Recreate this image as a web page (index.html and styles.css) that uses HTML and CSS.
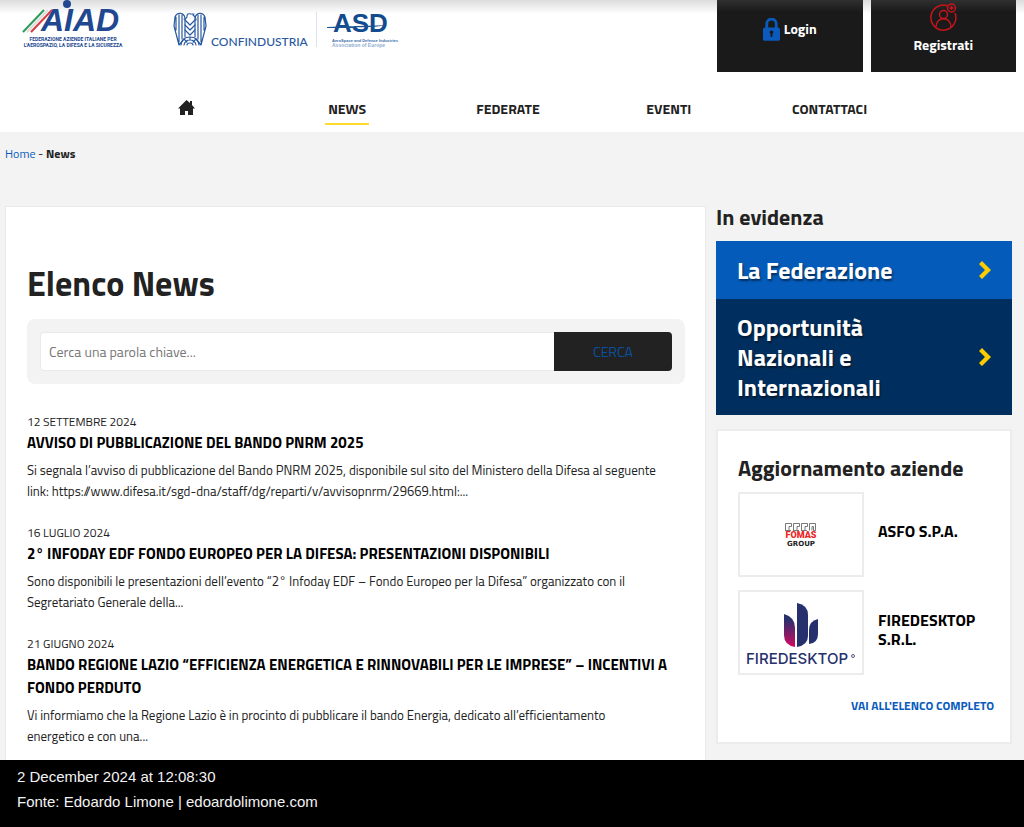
FILE: index.html
```html
<!DOCTYPE html>
<html lang="it">
<head>
<meta charset="utf-8">
<meta name="viewport" content="width=device-width, initial-scale=1">
<title>Elenco News</title>
<link rel="stylesheet" href="styles.css">
</head>
<body>
<header class="header">
  <div class="topbar">
    <a class="brand" href="#" aria-label="AIAD">
      <svg width="106" height="50" viewBox="0 0 106 50">
        <path d="M2 32 23 10" stroke="#2d9a58" stroke-width="2"/>
        <path d="M6 32 27 10" stroke="#ddd" stroke-width="2"/>
        <path d="M10 32 31 10" stroke="#d53d40" stroke-width="2"/>
        <circle cx="46" cy="4" r="4" fill="#214790"/>
        <text class="logo-aiad" x="20" y="31">AIAD</text>
        <text class="logo-caption" x="52" y="41" text-anchor="middle">FEDERAZIONE AZIENDE ITALIANE PER</text>
        <text class="logo-caption" x="52" y="47" text-anchor="middle">L'AEROSPAZIO, LA DIFESA E LA SICUREZZA</text>
      </svg>
    </a>
    <a class="brand brand-confindustria" href="#" aria-label="Confindustria">
      <svg width="136" height="50" viewBox="0 0 136 50">
        <g fill="none" stroke="#2858a0" stroke-width="1.2" stroke-linecap="round" stroke-linejoin="round">
          <path d="M14 16q0-3 4-2h3M20 15q3 2 3 5M14 17q-1 2-3 2"/>
          <path d="M12 18C11 12 4 12 2 17L1 26 6 45 11 39M12 18V37M9 15V39M6 15V42M3 17V30"/>
          <path d="M22 18c1-6 8-6 10-1l1 9-5 19-5-6M22 18V37M25 15V39M28 15V42M31 17V30"/>
          <path d="M12 30l5 5 5-5M12 25l5 5 5-5M12 20l5 5 5-5"/>
          <path d="M8 45q1-8 9-8t9 8M11 45q1-5 6-5t6 5M14 45q0-2 3-2t3 2M17 37v3M11 39l3 3M23 39l-3 3"/>
        </g>
        <text class="logo-confindustria" x="38" y="46">CONFINDUSTRIA</text>
      </svg>
    </a>
    <a class="brand brand-asd" href="#" aria-label="ASD">
      <svg width="72" height="50" viewBox="0 0 72 50">
        <text class="logo-asd" x="6" y="32">ASD</text>
        <path d="M0 27l28-1v2L0 28zM27 26q17 0 34-1-17 3-34 2z" fill="#1c5491"/>
        <text class="logo-asd-small" x="5" y="42">AeroSpace and Defence Industries</text>
        <text class="logo-asd-sub" x="5" y="47">Association of Europe</text>
      </svg>
    </a>
    <div class="account">
      <a class="account-link" href="#">
        <svg width="17" height="23" viewBox="0 0 18 24">
          <path d="M4 11V6a5 5 0 0 1 10 0v5" fill="none" stroke="#0a5bbd" stroke-width="3"/>
          <rect y="10" width="18" height="14" rx="2" fill="#0a5bbd"/>
          <path d="M9 13a2 2 0 0 1 1 3.700V20H8v-3.300A2 2 0 0 1 9 13z" fill="#1a1a1a"/>
        </svg>
        <span>Login</span>
      </a>
      <a class="account-link account-register" href="#">
        <svg width="27" height="28" viewBox="0 0 27 28" fill="none" stroke="#c8151b" stroke-width="1.500">
          <path d="M18 3A12.500 12.500 0 1 0 25 10"/>
          <circle cx="21.500" cy="5" r="4"/>
          <path d="M21.500 3v4M19.500 5h4"/>
          <circle cx="13.500" cy="11.500" r="4"/>
          <path d="M6 24c0-11 15-11 15 0"/>
        </svg>
        <span>Registrati</span>
      </a>
    </div>
  </div>
  <nav class="nav" aria-label="Principale">
    <a class="nav-link" href="#" aria-label="Home">
      <svg width="17" height="15" viewBox="0 0 17 15"><path d="M8.500 0 12 3V1h2v4l3 3.500h-2V15h-5v-4H7v4H2V8.500H0z" fill="#222"/></svg>
    </a>
    <a class="nav-link nav-active" href="#" aria-current="page">NEWS</a>
    <a class="nav-link" href="#">FEDERATE</a>
    <a class="nav-link" href="#">EVENTI</a>
    <a class="nav-link" href="#">CONTATTACI</a>
  </nav>
</header>

<div class="breadcrumb"><a href="#">Home</a> - <strong>News</strong></div>

<div class="layout">
  <main class="news">
    <h1 class="title">Elenco News</h1>
    <form class="search">
      <input class="search-input" type="text" placeholder="Cerca una parola chiave..." aria-label="Cerca una parola chiave">
      <button class="search-button" type="submit">CERCA</button>
    </form>
    <article class="item">
      <time class="item-date" datetime="2024-09-12">12 SETTEMBRE 2024</time>
      <h2 class="item-title">AVVISO DI PUBBLICAZIONE DEL BANDO PNRM 2025</h2>
      <p class="item-text">Si segnala l’avviso di pubblicazione del Bando PNRM 2025, disponibile sul sito del Ministero della Difesa al seguente link: https://www.difesa.it/sgd-dna/staff/dg/reparti/v/avvisopnrm/29669.html:...</p>
    </article>
    <article class="item">
      <time class="item-date" datetime="2024-07-16">16 LUGLIO 2024</time>
      <h2 class="item-title">2° INFODAY EDF FONDO EUROPEO PER LA DIFESA: PRESENTAZIONI DISPONIBILI</h2>
      <p class="item-text">Sono disponibili le presentazioni dell’evento “2° Infoday EDF – Fondo Europeo per la Difesa” organizzato con il Segretariato Generale della...</p>
    </article>
    <article class="item">
      <time class="item-date" datetime="2024-06-21">21 GIUGNO 2024</time>
      <h2 class="item-title">BANDO REGIONE LAZIO “EFFICIENZA ENERGETICA E RINNOVABILI PER LE IMPRESE” – INCENTIVI A FONDO PERDUTO</h2>
      <p class="item-text">Vi informiamo che la Regione Lazio è in procinto di pubblicare il bando Energia, dedicato all’efficientamento energetico e con una...</p>
    </article>
  </main>

  <aside class="side">
    <h2 class="side-title">In evidenza</h2>
    <a class="feature" href="#">
      <span>La Federazione</span>
      <svg width="12" height="18" viewBox="0 0 12 18"><path d="M3 0 12 9 3 18 0 15 6 9 0 3z" fill="#fc0"/></svg>
    </a>
    <a class="feature feature-dark" href="#">
      <span>Opportunità Nazionali e Internazionali</span>
      <svg width="12" height="18" viewBox="0 0 12 18"><path d="M3 0 12 9 3 18 0 15 6 9 0 3z" fill="#fc0"/></svg>
    </a>
    <section class="companies">
      <h2 class="companies-title">Aggiornamento aziende</h2>
      <a class="company" href="#">
        <span class="company-logo">
          <svg width="34" height="24" viewBox="0 0 34 24">
            <path d="M1.500 7.500v-7h6v3H5v4M9.500 7.500v-7h6v3H13v4M17.500 7.500v-7h6v3H21v4M25.500 7.500v-7h6v7h-2v-4H28v4M1 7.500h6M9 7.500h6M17 7.500h6" fill="none" stroke="#777"/>
            <text class="logo-fomas" x="17" y="15" text-anchor="middle">FOMAS</text>
            <text class="logo-group" x="17" y="23" text-anchor="middle">GROUP</text>
          </svg>
        </span>
        <span class="company-name">ASFO S.P.A.</span>
      </a>
      <a class="company" href="#">
        <span class="company-logo">
          <svg width="114" height="70" viewBox="0 0 114 70">
            <defs><linearGradient id="flame" x1="0" y1="0" x2="0" y2="1"><stop offset=".15" stop-color="#26306d"/><stop offset="1" stop-color="#d20a60"/></linearGradient></defs>
            <path d="M40 16Q51 19 51 30V49Q40 47 40 37z" fill="url(#flame)"/>
            <path d="M53 5Q64 7 64 17V38Q64 47 53 49z" fill="#26306d"/>
            <path d="M65 32Q65 23 74 21V36Q74 45 65 46z" fill="#26306d"/>
            <text class="logo-fire" x="2" y="66">FIREDESKTOP</text>
            <circle cx="109" cy="58" r="1.500" fill="none" stroke="#26306d" stroke-width=".8"/>
          </svg>
        </span>
        <span class="company-name">FIREDESKTOP S.R.L.</span>
      </a>
      <a class="companies-all" href="#">VAI ALL'ELENCO COMPLETO</a>
    </section>
  </aside>
</div>

<footer class="caption">
  <p>2 December 2024 at 12:08:30</p>
  <p>Fonte: Edoardo Limone | edoardolimone.com</p>
</footer>
</body>
</html>
```

FILE: styles.css
```css
* { box-sizing: border-box; }
body {
  margin: 0;
  background: #f3f3f3;
  color: #222;
  font-family: "Titillium Web", Roboto, sans-serif;
  font-size: 14px;
}
a { color: #0a5bbd; text-decoration: none; }
svg { display: block; flex: none; }
h1, h2, p { margin: 0; }

.header { background: linear-gradient(#dcdcdc, #fff 14px); }
.topbar { display: flex; align-items: flex-start; padding: 0 8px 0 21px; }
.brand-confindustria { margin-left: 46px; }
.brand-asd { margin-left: 7px; padding-left: 11px; background: linear-gradient(#dde3ec, #dde3ec) 0 12px / 1px 35px no-repeat; }
.logo-aiad { font: italic 700 32px "Liberation Sans", sans-serif; fill: #214790; }
.logo-caption { font: 700 5px Roboto, sans-serif; fill: #214790; }
.logo-confindustria { font: 500 12px Lato, sans-serif; fill: #2858a0; }
.logo-asd { font: 700 26px "Liberation Sans", sans-serif; fill: #124b8e; }
.logo-asd-small { font: 700 4px "Liberation Sans", sans-serif; fill: #3c70ad; }
.logo-asd-sub { font: 700 5px "Liberation Sans", sans-serif; fill: #91aed1; }

.account { display: flex; gap: 8px; margin-left: auto; width: 30%; min-width: 299px; }
.account-link {
  flex: 1;
  display: flex;
  align-items: center;
  justify-content: center;
  gap: 4px;
  height: 72px;
  padding-bottom: 14px;
  background: linear-gradient(#303030, #1a1a1a 12px);
  color: #fff;
  font-weight: 700;
  line-height: 20px;
}
.account-register { flex-direction: column; padding-bottom: 14px; }

.nav { display: grid; grid-template-columns: repeat(5, 1fr); justify-items: center; padding: 27px 114px 7px 106px; }
.nav-link { display: flex; align-items: center; padding: 0 3px 5px; height: 26px; border-bottom: 2px solid transparent; color: #222; font-weight: 700; }
.nav-link svg { margin-bottom: 3px; }
.nav-active { border-color: #ffdb2d; }

.breadcrumb { padding: 14px 5px 44px; font-size: 12px; line-height: 16px; }

.layout { display: grid; grid-template-columns: minmax(0, 1fr) 296px; gap: 10px; padding: 0 12px 0 5px; min-height: 553px; }
.news { padding: 52px 20px 12px 21px; background: #fff; border: 1px solid #e9e9e9; border-bottom: 0; }
.title { font-size: 34px; line-height: 48px; }
.search { display: flex; margin-top: 12px; padding: 13px; border-radius: 8px; background: #f3f3f3; }
.search-input {
  flex: 1;
  min-width: 0;
  height: 39px;
  padding: 0 8px;
  border: 1px solid #e9e9e9;
  border-right: 0;
  border-radius: 4px 0 0 4px;
  background: #fff;
  color: #222;
  font: inherit;
}
.search-input::placeholder { color: #777; opacity: 1; }
.search-button { width: 118px; border: 0; border-radius: 0 4px 4px 0; background: #222; color: #0a4f9f; font: inherit; }

.item { margin-top: 29px; }
.item + .item { margin-top: 21px; }
.item-date { display: block; font-size: 12px; line-height: 18px; }
.item-title { color: #000; font-size: 15px; line-height: 23px; }
.item-text { margin-top: 6px; padding: 0 24px 1px 0; font-size: 13px; line-height: 21px; }

.side-title { margin-bottom: 12px; font-size: 22px; line-height: 23px; }
.feature {
  display: flex;
  align-items: center;
  justify-content: space-between;
  padding: 14px 21px;
  background: #055bb9;
  color: #fff;
  font-size: 24px;
  font-weight: 700;
  line-height: 30px;
  text-shadow: 1px 2px 2px rgba(0, 0, 0, .5);
}
.feature span { max-width: 200px; }
.feature-dark { padding: 13px 21px; background: #002f5f; }
.companies { display: flex; flex-direction: column; gap: 13px; margin-top: 14px; padding: 24px 16px 26px 20px; background: #fff; border: 2px solid #ececec; }
.companies-title { margin-bottom: -2px; font-size: 22px; line-height: 26px; }
.company { display: grid; grid-template-columns: 126px 1fr; gap: 14px; align-items: center; color: #000; }
.company-logo { display: grid; place-items: center; height: 85px; border: 2px solid #ececec; background: #fff; }
.company-name { padding-bottom: 6px; font-size: 16px; font-weight: 700; line-height: 19px; }
.companies-all { align-self: flex-end; margin-top: 8px; font-size: 12px; font-weight: 700; line-height: 20px; }
.logo-fomas { font: 900 9px Roboto, sans-serif; fill: #ed251f; }
.logo-group { font: 700 7px "DejaVu Sans", sans-serif; fill: #222; }
.logo-fire { font: 500 15px Inter, sans-serif; fill: #26306d; }

.caption { padding: 4px 17px 13px; background: #000; color: #f3f3f3; font-family: "Liberation Sans", sans-serif; font-size: 15px; line-height: 25px; border-bottom: 1px solid #777; }
```
